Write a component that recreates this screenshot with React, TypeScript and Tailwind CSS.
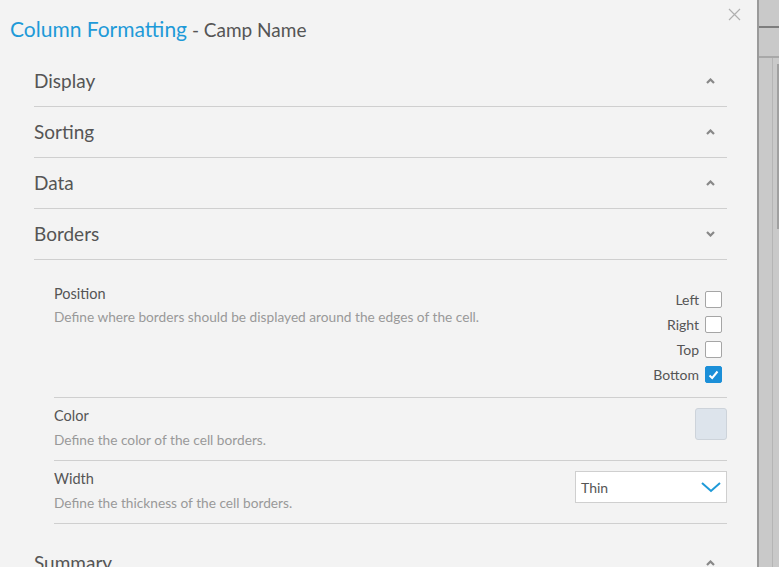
import { useState } from 'react';

type Section = { name: string; open?: boolean };

const sections: Section[] = [
  { name: 'Display' },
  { name: 'Sorting' },
  { name: 'Data' },
  { name: 'Borders', open: true },
];

function Caret({ up }: { up: boolean }) {
  return (
    <svg width="9" height="6" viewBox="0 0 9 6" className="text-[#888]">
      {up ? (
        <polyline points="1,5 4.5,1.5 8,5" fill="none" stroke="currentColor" strokeWidth="2.2" />
      ) : (
        <polyline points="1,1 4.5,4.5 8,1" fill="none" stroke="currentColor" strokeWidth="2.2" />
      )}
    </svg>
  );
}

function Check({ label, checked, onToggle }: { label: string; checked: boolean; onToggle: () => void }) {
  return (
    <div className="flex items-center justify-end gap-[6px] h-[25px]">
      <span className="text-[14px] text-[#555]">{label}</span>
      <button
        onClick={onToggle}
        className={`w-[17px] h-[17px] rounded-[2px] flex items-center justify-center ${
          checked ? 'bg-[#1b8fd8] border border-[#1b8fd8]' : 'bg-white border border-[#a5a5a5]'
        }`}
      >
        {checked && (
          <svg width="11" height="10" viewBox="0 0 11 10">
            <polyline points="1.5,5.5 4.2,8 9.5,1.5" fill="none" stroke="white" strokeWidth="2" />
          </svg>
        )}
      </button>
    </div>
  );
}

function SectionHeader({ name, open }: { name: string; open?: boolean }) {
  return (
    <div className="h-[51px] flex items-center justify-between border-b border-[#cfcfcf]">
      <span className="text-[19px] text-[#555]">{name}</span>
      <div className="w-[18px] flex justify-center mr-[8px]">
        <Caret up={!open} />
      </div>
    </div>
  );
}

export default function App() {
  const [pos, setPos] = useState({ Left: false, Right: false, Top: false, Bottom: true });

  return (
    <div
      className="h-[567px] flex overflow-hidden bg-[#f3f3f3]"
      style={{ fontFamily: 'Lato, "Liberation Sans", sans-serif' }}
    >
      {/* 弹窗 */}
      <div className="relative flex-1 bg-[#f3f3f3]">
        <button className="absolute top-[8px] right-[16px] text-[#b0b0b0]">
          <svg width="13" height="13" viewBox="0 0 13 13">
            <path d="M1 1 L12 12 M12 1 L1 12" stroke="currentColor" strokeWidth="1.2" />
          </svg>
        </button>

        <div className="pt-[13px] pl-[10px] h-[56px]">
          <span className="text-[21px] text-[#1e9ad8]">Column Formatting</span>
          <span className="text-[19px] text-[#555]"> - Camp Name</span>
        </div>

        <div className="ml-[34px] mr-[30px]">
          {sections.map((s) => (
            <SectionHeader key={s.name} name={s.name} open={s.open} />
          ))}

          {/* Borders 内容 */}
          <div className="pl-[20px] pb-[14px]">
            <div className="flex justify-between pt-[21px] pb-[10px] border-b border-[#cfcfcf]">
              <div>
                <div className="text-[14.5px] leading-[20px] text-[#555] mt-[3px]">Position</div>
                <div className="text-[13.7px] leading-[20px] text-[#999] mt-[3px]">
                  Define where borders should be displayed around the edges of the cell.
                </div>
              </div>
              <div className="pr-[5px] mt-[6px]">
                {(Object.keys(pos) as (keyof typeof pos)[]).map((k) => (
                  <Check key={k} label={k} checked={pos[k]} onToggle={() => setPos({ ...pos, [k]: !pos[k] })} />
                ))}
              </div>
            </div>

            <div className="flex justify-between items-start pt-[8px] pb-[10px] border-b border-[#cfcfcf]">
              <div>
                <div className="text-[14.5px] leading-[20px] text-[#555]">Color</div>
                <div className="text-[13.7px] leading-[20px] text-[#999] mt-[4px]">Define the color of the cell borders.</div>
              </div>
              <div className="w-[32px] h-[32px] mt-[2px] rounded-[3px] bg-[#dde4ec] border border-[#cdd3da]" />
            </div>

            <div className="flex justify-between items-start pt-[8px] pb-[10px] border-b border-[#cfcfcf]">
              <div>
                <div className="text-[14.5px] leading-[20px] text-[#555]">Width</div>
                <div className="text-[13.7px] leading-[20px] text-[#999] mt-[4px]">Define the thickness of the cell borders.</div>
              </div>
              <div className="w-[152px] h-[32px] mt-[2px] bg-white border border-[#cfcfcf] flex items-center justify-between pl-[5px] pr-[4px]">
                <span className="text-[14px] text-[#555]">Thin</span>
                <svg width="22" height="12" viewBox="0 0 22 12">
                  <polyline points="2,2 11,10 20,2" fill="none" stroke="#1e9ad8" strokeWidth="2" />
                </svg>
              </div>
            </div>
          </div>

          <SectionHeader name="Summary" />
        </div>
      </div>

      {/* 背景页面 */}
      <div className="w-[22px] bg-[#c9c9c9] border-l-2 border-[#9a9a9a] flex flex-col">
        <div className="h-[28px] border-b-2 border-[#7d7d7d]" />
        <div className="h-[30px] border-b-2 border-[#a8a8a8]" />
        <div className="flex-1 flex justify-end">
          <div className="w-px bg-[#b5b5b5] mr-[4px]" />
          <div className="w-[2px] h-[165px] mt-[6px] bg-[#a0a0a0]" />
        </div>
      </div>
    </div>
  );
}
